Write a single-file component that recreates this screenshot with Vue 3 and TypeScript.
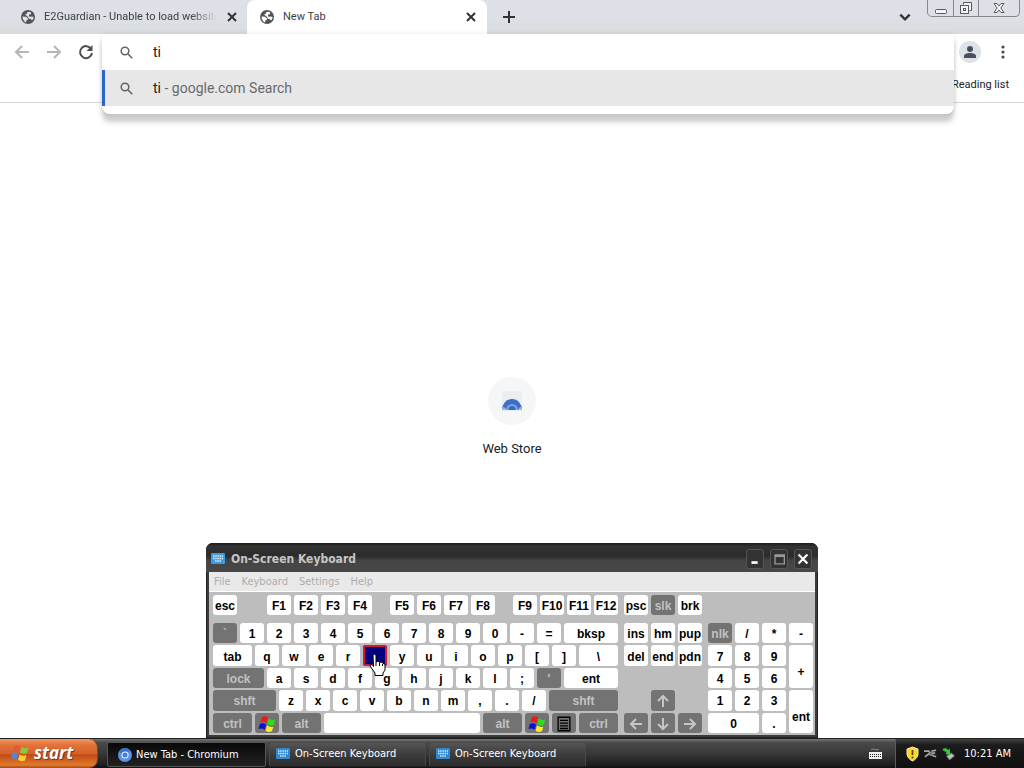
<script setup lang="ts">
import { ref } from 'vue'

interface Key {
  label: string
  w?: number
  kind?: 'dark' | 'win' | 'menu' | 'pressed' | 'up' | 'down' | 'left' | 'right'
  name?: string
  span?: string
}

const chars = (s: string): Key[] => s.split(' ').map((label) => ({ label }))

const query = ref('ti')

const functionGroups: Key[][] = [
  [{ label: 'esc' }],
  chars('F1 F2 F3 F4'),
  chars('F5 F6 F7 F8'),
  chars('F9 F10 F11 F12'),
]

const mainRows: Key[][] = [
  [{ label: '`', kind: 'dark' }, ...chars('1 2 3 4 5 6 7 8 9 0 - ='), { label: 'bksp', w: 54 }],
  [
    { label: 'tab', w: 39 },
    ...chars('q w e r'),
    { label: '', name: 't', kind: 'pressed' },
    ...chars('y u i o p [ ]'),
    { label: '\\', w: 39 },
  ],
  [
    { label: 'lock', w: 51, kind: 'dark' },
    ...chars('a s d f g h j k l ;'),
    { label: "'", kind: 'dark' },
    { label: 'ent', w: 54 },
  ],
  [{ label: 'shft', w: 63, kind: 'dark' }, ...chars('z x c v b n m , . /'), { label: 'shft', w: 69, kind: 'dark' }],
  [
    { label: 'ctrl', w: 39, kind: 'dark' },
    { label: '', name: 'Windows', kind: 'win' },
    { label: 'alt', w: 39, kind: 'dark' },
    { label: '', name: 'space', w: 156 },
    { label: 'alt', w: 39, kind: 'dark' },
    { label: '', name: 'Windows', kind: 'win' },
    { label: '', name: 'Menu', kind: 'menu' },
    { label: 'ctrl', w: 39, kind: 'dark' },
  ],
]

const systemKeys: Key[] = [{ label: 'psc' }, { label: 'slk', kind: 'dark' }, { label: 'brk' }]

const navKeys: Key[] = [
  ...chars('ins hm pup del end pdn'),
  { label: '', name: 'Up', kind: 'up', span: 'n-up' },
  { label: '', name: 'Left', kind: 'left', span: 'n-left' },
  { label: '', name: 'Down', kind: 'down', span: 'n-down' },
  { label: '', name: 'Right', kind: 'right', span: 'n-right' },
]

const padKeys: Key[] = [
  { label: 'nlk', kind: 'dark' },
  ...chars('/ * - 7 8 9'),
  { label: '+', span: 'tall' },
  ...chars('4 5 6 1 2 3'),
  { label: 'ent', span: 'tall' },
  { label: '0', span: 'wide' },
  { label: '.' },
]

const arrows: Record<string, string> = {
  up: 'M8 14V3M3 8l5-5 5 5',
  down: 'M8 2v11M3 8l5 5 5-5',
  left: 'M14 8H3M8 3L3 8l5 5',
  right: 'M2 8h11M8 3l5 5-5 5',
}

const menus = ['File', 'Keyboard', 'Settings', 'Help']
const isDark = (k: Key) => !!k.kind && k.kind !== 'pressed'
</script>

<template>
  <div class="desktop">
    <main class="browser">
      <header class="tabstrip">
        <div class="tab">
          <svg class="globe" viewBox="0 0 14 14"><circle cx="7" cy="7" r="7" fill="#505458" /><path d="M1.500 6.500l3.500.3 2 1.700-.3 1.500-1.500.5v2C3 11.800 1.400 9.500 1.500 6.500zM6.500 2l2-.3 1.800 1-.5 1.500-1.600.4-.4 1.600 1.700.6 1.700-.4 1.500.8c-.2 1.300-.8 2.400-1.700 3.300l-1.200-1.400-2-.3-1-2L5 5.200l-1.200-.4L5.500 4z" fill="#dee1e6" /></svg>
          <button class="tab-title">E2Guardian - Unable to load website</button>
          <button class="tab-close" aria-label="Close tab"><svg viewBox="0 0 10 10"><path d="M1 1l8 8M9 1L1 9" /></svg></button>
        </div>
        <div class="tab active">
          <svg class="globe" viewBox="0 0 14 14"><circle cx="7" cy="7" r="7" fill="#505458" /><path d="M1.500 6.500l3.500.3 2 1.700-.3 1.500-1.500.5v2C3 11.800 1.400 9.500 1.500 6.500zM6.500 2l2-.3 1.800 1-.5 1.500-1.600.4-.4 1.600 1.700.6 1.700-.4 1.500.8c-.2 1.300-.8 2.400-1.700 3.300l-1.200-1.400-2-.3-1-2L5 5.200l-1.200-.4L5.500 4z" fill="#fff" /></svg>
          <button class="tab-title">New Tab</button>
          <button class="tab-close" aria-label="Close tab"><svg viewBox="0 0 10 10"><path d="M1 1l8 8M9 1L1 9" /></svg></button>
        </div>
        <button class="new-tab" aria-label="New tab"><svg viewBox="0 0 12 12"><path d="M6 0v12M0 6h12" /></svg></button>
        <button class="tab-search" aria-label="Search tabs"><svg viewBox="0 0 12 12"><path d="M2 4l4 4 4-4" /></svg></button>
        <div class="caption">
          <button aria-label="Minimize"><svg viewBox="0 0 14 14"><rect x="1.500" y="8.500" width="11" height="4" rx="1" /></svg></button>
          <button aria-label="Restore"><svg viewBox="0 0 14 14"><path d="M4.500 3.500v-2h8v8h-2" /><rect x="1.500" y="4.500" width="8" height="8" /><rect x="4.500" y="7.500" width="2" height="2" /></svg></button>
          <button class="wide-btn" aria-label="Close"><svg viewBox="0 0 14 14"><path d="M2 2.500h3l2 2.500 2-2.500h3L8.800 7l3.200 4.500H9L7 9l-2 2.500H2L5.200 7z" /></svg></button>
        </div>
      </header>

      <div class="toolbar">
        <button class="nav muted" aria-label="Back"><svg viewBox="0 0 16 16"><path d="M15 8H2M8 2L2 8l6 6" /></svg></button>
        <button class="nav muted" aria-label="Forward"><svg viewBox="0 0 16 16"><path d="M1 8h13M8 2l6 6-6 6" /></svg></button>
        <button class="nav" aria-label="Reload"><svg viewBox="0 0 16 16"><path d="M13.200 5A6 6 0 1 0 14 9" /><path d="M14.500 1v6h-6z" fill="#4b4e52" stroke="none" /></svg></button>
        <span class="grow"></span>
        <button class="avatar" aria-label="Profile"><svg viewBox="0 0 14 14"><circle cx="7" cy="4" r="3" /><path d="M1 13v-2c0-2 3-3 6-3s6 1 6 3v2z" /></svg></button>
        <button class="more" aria-label="Menu"><svg viewBox="0 0 4 14"><circle cx="2" cy="2" r="1.600" /><circle cx="2" cy="7" r="1.600" /><circle cx="2" cy="12" r="1.600" /></svg></button>
      </div>
      <div class="bookmarks"><button>Reading list</button></div>

      <div class="omnibox">
        <label class="omni-row">
          <svg class="glass" viewBox="0 0 13 13"><circle cx="5" cy="5" r="3.800" /><path d="M8 8l4.300 4.300" /></svg>
          <input v-model="query" aria-label="Address and search bar" />
        </label>
        <button class="omni-row suggestion">
          <svg class="glass" viewBox="0 0 13 13"><circle cx="5" cy="5" r="3.800" /><path d="M8 8l4.300 4.300" /></svg>
          <span><b>{{ query }}</b> - google.com Search</span>
        </button>
      </div>

      <section class="page">
        <a class="shortcut" href="#">
          <span class="tile">
            <svg viewBox="0 0 20 20"><rect width="20" height="20" fill="#e9eef2" /><path d="M0 19a10 11 0 0 1 20 0z" fill="#3f6cc4" /><path d="M4 19a6 6 0 0 1 12 0z" fill="#7ea3e2" /><path d="M6.500 19a3.500 4 0 0 1 7 0z" fill="#3568c9" /><path d="M0 19c0-2 1-3 2-3l3 3zM20 19c0-2-1-3-2-3l-2 3z" fill="#9dbbe8" /></svg>
          </span>
          <span>Web Store</span>
        </a>
      </section>
    </main>

    <section class="osk">
      <header class="osk-title">
        <svg class="kb-icon" viewBox="0 0 14 11"><rect width="14" height="11" rx="1" fill="#3f9be0" /><path d="M2 3h10M2 5.500h10M4 8h6" stroke="#d8f0ff" stroke-width="1.500" stroke-dasharray="1.500 .7" /></svg>
        <h1>On-Screen Keyboard</h1>
        <button aria-label="Minimize"><svg viewBox="0 0 18 18"><path d="M5 13h7" stroke="#fff" stroke-width="3" /></svg></button>
        <button aria-label="Maximize"><svg viewBox="0 0 18 18"><path d="M4 4.500h11v10H4.500v-10M4 6h11" stroke="#999" stroke-width="1.500" fill="none" /></svg></button>
        <button aria-label="Close"><svg viewBox="0 0 18 18"><path d="M4 4l10 10M14 4L4 14" stroke="#fff" stroke-width="2.500" /></svg></button>
      </header>
      <nav class="osk-menu"><button v-for="m in menus" :key="m">{{ m }}</button></nav>

      <div class="keyboard">
        <div class="main-block">
          <div class="fn-row">
            <div v-for="(group, g) in functionGroups" :key="g" class="key-row fn-group">
              <button v-for="k in group" :key="k.label" class="key">{{ k.label }}</button>
            </div>
          </div>
          <div class="rows">
            <div v-for="(row, r) in mainRows" :key="r" class="key-row">
              <button
                v-for="(k, i) in row"
                :key="i"
                class="key"
                :class="{ dark: isDark(k), pressed: k.kind === 'pressed' }"
                :style="{ flexGrow: k.w ?? 24 }"
                :aria-label="k.name"
              >
                {{ k.label }}
                <svg v-if="k.kind === 'win'" class="flag" viewBox="0 0 20 20">
                  <path d="M4 3q3-3 7-.5L9.500 9Q6 6.500 2.500 8.500z" fill="#f01818" />
                  <path d="M12 4q3 2.500 7 1l-1.500 6q-4 1.500-7-1z" fill="#28e018" />
                  <path d="M2 10q4-2 7 .5L7.500 16.500Q4 14 .5 15.500z" fill="#1010d0" />
                  <path d="M10 11.500q3 2.500 7 1.500l-1.500 5q-4 2-7-.5z" fill="#f8f020" />
                </svg>
                <svg v-if="k.kind === 'menu'" class="flag" viewBox="0 0 20 20"><path d="M3.500 2.500h13v15h-13zM5.500 6h9M5.500 9h9M5.500 12h9M5.500 15h9" fill="none" stroke="#000" stroke-width="1.500" /></svg>
                <svg v-if="k.kind === 'pressed'" class="pointer" viewBox="0 0 18 24"><path d="M4 2q1.500-1.500 3 0v7l2-1 1.500 1.500 2-.5 1.500 1.500 2 .5v6l-2 3v2.500H6V20l-5-7q0-2 2-1.500l1.500 2z" fill="#fff" stroke="#000" /><path d="M7 9v4M10.500 10v3M13.500 11v2" stroke="#000" fill="none" /></svg>
              </button>
            </div>
          </div>
        </div>
        <div class="nav-block">
          <div class="key-row fn-line"><button v-for="k in systemKeys" :key="k.label" class="key" :class="{ dark: isDark(k) }">{{ k.label }}</button></div>
          <div class="rows three">
            <button v-for="(k, i) in navKeys" :key="i" class="key" :class="[k.span, { dark: isDark(k) }]" :aria-label="k.name">
              {{ k.label }}
              <svg v-if="k.kind" class="arrow" viewBox="0 0 16 16"><path :d="arrows[k.kind]" /></svg>
            </button>
          </div>
        </div>
        <div class="pad-block">
          <div class="rows four">
            <button v-for="(k, i) in padKeys" :key="i" class="key" :class="[k.span, { dark: isDark(k) }]">{{ k.label }}</button>
          </div>
        </div>
      </div>
    </section>

    <footer class="taskbar">
      <button class="start">
        <svg viewBox="0 0 20 18">
          <path d="M4 3q3-3 6-.5L8.500 8.500Q5.500 6.500 2.500 8z" fill="#e2583a" />
          <path d="M11.500 3q3 2 7 .5L17 9q-4 1.500-7-.5z" fill="#8cc63f" />
          <path d="M2 9.500q3-2 6 .5l-1.500 5.500Q3.500 13.500.5 15z" fill="#4f86e0" />
          <path d="M9.500 10.500q3 2 7 .5L15 16.500q-4 1.500-7-.5z" fill="#f8d030" />
        </svg>
        start
      </button>
      <button class="task current">
        <svg class="chromium" viewBox="0 0 14 14"><circle cx="7" cy="7" r="7" fill="#5b93e6" /><path d="M7 3.500h6A7 7 0 0 0 1.500 3L4 8z" fill="#3a6fc8" /><circle cx="7" cy="7" r="3.600" fill="#e8f1ff" /><circle cx="7" cy="7" r="2.500" fill="#3f7de0" /></svg>
        New Tab - Chromium
      </button>
      <button v-for="n in 2" :key="n" class="task">
        <svg class="kb-icon" viewBox="0 0 14 11"><rect width="14" height="11" rx="1" fill="#3288cc" /><path d="M2 3h10M2 5.500h10M4 8h6" stroke="#c8ecff" stroke-width="1.500" stroke-dasharray="1.500 .7" /></svg>
        On-Screen Keyboard
      </button>
      <span class="grow"></span>
      <button class="lang" aria-label="Keyboard layout"><svg viewBox="0 0 13 13"><path d="M0 5h13v7H0z" fill="#eee" /><path d="M1 7.500h11M1 9.500h11" stroke="#222" stroke-dasharray="1 1" /><path d="M2 2.500q2-1 4 0t4-.5" fill="none" stroke="#888" /></svg></button>
      <div class="tray">
        <svg viewBox="0 0 14 16"><path d="M7 1l5.500 2v5c0 3-2.500 5.500-5.500 7-3-1.500-5.500-4-5.500-7V3z" fill="#fcd82c" stroke="#f6eeb0" /><path d="M7 4v5M7 10.500v2" stroke="#5c4700" stroke-width="1.800" /></svg>
        <svg viewBox="0 0 16 16"><path d="M1 5h5l2 2h5M2 11l4-3 8 3M9 5l5-1" stroke="#a4a8a4" stroke-width="1.800" fill="none" /><path d="M7 7l4 2" stroke="#666" stroke-width="1.500" fill="none" /></svg>
        <svg viewBox="0 0 14 16"><path d="M5 10l5-3 3 3-5 4z" fill="#b8beb8" stroke="#666" /><path d="M1 3l3-1 3 2 1-2 1 7-5-1 1-2-3-1z" fill="#35c43b" /></svg>
        <time>10:21 AM</time>
      </div>
    </footer>
  </div>
</template>

<style>
html,
body {
  margin: 0;
}
</style>

<style scoped>
.desktop {
  position: relative;
  display: flex;
  flex-direction: column;
  height: 100vh;
  overflow: hidden;
  background: #fff;
  font-family: "DejaVu Sans Condensed", "Noto Sans", sans-serif;
  font-size: 11px;
  color: #3c4043;
}
* {
  box-sizing: border-box;
}
button,
input {
  margin: 0;
  padding: 0;
  border: 0;
  background: none;
  font: inherit;
  color: inherit;
}
svg {
  display: block;
  flex: none;
}
.grow {
  flex: 1;
}
.browser {
  position: relative;
  display: flex;
  flex-direction: column;
  flex: 1;
  font-family: Roboto, "Noto Sans", sans-serif;
}
.tabstrip {
  display: flex;
  height: 34px;
  background: linear-gradient(#e0e0e8, #dce0e6 60%, #d8dbdd);
}
.tab {
  display: flex;
  align-items: center;
  gap: 9px;
  width: 240px;
  padding: 0 10px 0 13px;
}
.tab:first-child {
  width: 247px;
  padding: 0 9px 0 21px;
}
.tab.active {
  background: #fff;
  border-radius: 8px 8px 0 0;
}
.globe {
  width: 14px;
  height: 14px;
}
.tab-title {
  flex: 1;
  min-width: 0;
  overflow: hidden;
  white-space: nowrap;
  text-align: left;
  line-height: 20px;
}
.tab:first-child .tab-title {
  mask-image: linear-gradient(90deg, #000 85%, transparent);
}
.tab-close svg {
  width: 12px;
  height: 10px;
  stroke: #303236;
  stroke-width: 2;
}
.new-tab {
  width: 44px;
  display: grid;
  place-items: center;
}
.new-tab svg {
  width: 12px;
  height: 12px;
  stroke: #303236;
  stroke-width: 2;
}
.tab-search {
  margin-left: auto;
  padding-right: 15px;
}
.tab-search svg {
  width: 14px;
  height: 14px;
  fill: none;
  stroke: #303236;
  stroke-width: 2;
}
.caption {
  display: flex;
  height: 17px;
  margin-right: 4px;
  border: 1px solid #85888c;
  border-top: 0;
  border-radius: 0 0 5px 5px;
}
.caption button {
  width: 25px;
  display: grid;
  place-items: center;
}
.caption button + button {
  border-left: 1px solid #85888c;
}
.caption .wide-btn {
  width: 41px;
}
.caption svg {
  width: 14px;
  height: 14px;
  fill: #f4f4f6;
  stroke: #55585c;
}
.toolbar {
  display: flex;
  align-items: center;
  height: 36px;
  padding: 0 13px 0 14px;
  gap: 16px;
}
.nav svg {
  width: 16px;
  height: 16px;
  fill: none;
  stroke: #4b4e52;
  stroke-width: 2;
}
.nav.muted svg {
  stroke: #b4b6b8;
}
.avatar {
  width: 22px;
  height: 22px;
  margin-right: -2px;
  border-radius: 50%;
  background: #dde1e8;
  display: grid;
  place-items: center;
}
.avatar svg {
  width: 14px;
  height: 14px;
  fill: #47505c;
}
.more {
  width: 16px;
  display: grid;
  place-items: center;
}
.more svg {
  width: 4px;
  height: 14px;
  fill: #47494d;
}
.bookmarks {
  display: flex;
  justify-content: flex-end;
  height: 33px;
  padding: 0 15px 4px 0;
  border-bottom: 1px solid #d6d8da;
  color: #202124;
}
.omnibox {
  position: absolute;
  top: 34px;
  left: 102px;
  right: 70px;
  padding-bottom: 8px;
  background: #fff;
  border-radius: 0 0 8px 8px;
  box-shadow: 0 8px 5px rgba(70, 80, 75, 0.28), 0 0 4px rgba(0, 0, 0, 0.1);
  font-size: 14px;
}
.omni-row {
  display: flex;
  align-items: center;
  gap: 20px;
  width: 100%;
  height: 36px;
  padding-left: 18px;
}
.omni-row input {
  flex: 1;
  outline: none;
  color: #222;
}
.suggestion {
  padding-left: 15px;
  border-left: 3px solid #2a66c8;
  background: #e7e7e7;
  color: #686a6d;
}
.suggestion b {
  font-weight: 400;
  color: #222;
}
.glass {
  width: 13px;
  height: 13px;
  fill: none;
  stroke: #5f6368;
  stroke-width: 1.5;
}
.page {
  display: flex;
  flex: 1;
  justify-content: center;
  padding-top: 274px;
}
.shortcut {
  display: flex;
  flex-direction: column;
  align-items: center;
  gap: 15px;
  height: 82px;
  color: #202124;
  text-decoration: none;
  font: 13px/18px Roboto, sans-serif;
}
.tile {
  display: grid;
  place-items: center;
  width: 48px;
  height: 48px;
  border-radius: 50%;
  background: #f5f6f7;
}
.tile svg {
  width: 20px;
  height: 20px;
}
.osk {
  position: absolute;
  left: 206px;
  bottom: 30px;
  width: 612px;
  padding: 0 3px 3px;
  border-radius: 7px 7px 0 0;
  background: #3c3c3c;
  box-shadow: inset 0 0 0 1px #222;
}
.osk-title {
  display: flex;
  align-items: center;
  gap: 6px;
  height: 29px;
  margin: 0 -3px;
  padding: 2px 6px 0 5px;
  border-radius: 7px 7px 0 0;
  background: linear-gradient(#1c1c1c, #333 12%, #2b2b2b 45%, #444 60%, #484848);
}
.osk-title h1 {
  flex: 1;
  margin: 0;
  font-size: 12px;
  font-weight: 700;
  color: #c6c6c6;
}
.kb-icon {
  width: 14px;
  height: 11px;
}
.osk-title button {
  border: 1px solid #555;
  border-radius: 3px;
  background: #333;
}
.osk-title button svg {
  width: 16px;
  height: 18px;
}
.osk-menu {
  display: flex;
  gap: 11px;
  height: 20px;
  padding: 0 5px 1px;
  background: #e9e9e9;
  border-bottom: 1px solid #fff;
  color: #adadad;
}
.keyboard {
  display: grid;
  grid-template-columns: 405fr 78fr 105fr;
  gap: 6px;
  padding: 3px 2px 2px 4px;
  background: #bdbdbd;
  font: 700 12px/16px "Liberation Sans", Arial, sans-serif;
}
.fn-row {
  display: flex;
  gap: 18px;
  height: 20px;
  margin-bottom: 8px;
}
.fn-group {
  flex: 4 1 0;
}
.fn-group:first-child {
  flex: none;
  width: 24px;
  margin-right: 12px;
}
.fn-line {
  height: 20px;
  margin-bottom: 8px;
}
.key-row {
  display: flex;
  gap: 3px;
}
.rows {
  display: grid;
  grid-template-rows: repeat(5, minmax(0, 1fr));
  gap: 2px 3px;
  height: 110px;
}
.rows.three {
  grid-template-columns: repeat(3, minmax(0, 1fr));
}
.rows.four {
  grid-template-columns: repeat(4, minmax(0, 1fr));
}
.pad-block {
  padding-top: 28px;
}
.key {
  position: relative;
  display: flex;
  align-items: center;
  justify-content: center;
  flex: 1 1 0;
  min-width: 0;
  padding-top: 2px;
  border-radius: 3px;
  background: #fff;
  color: #000;
  white-space: nowrap;
}
.key.dark {
  background: #737373;
  color: #c2c2c2;
}
.key.pressed {
  box-shadow: inset 0 0 0 2px #d21a36;
  background: #000080;
}
.pointer {
  position: absolute;
  top: 8px;
  left: 6px;
  z-index: 2;
  width: 18px;
  height: 24px;
}
.flag {
  width: 20px;
  height: 18px;
}
.arrow {
  width: 16px;
  height: 16px;
  fill: none;
  stroke: #c6c6c6;
  stroke-width: 2;
}
.n-up {
  grid-area: 4 / 2;
}
.n-left {
  grid-area: 5 / 1;
}
.n-down {
  grid-area: 5 / 2;
}
.n-right {
  grid-area: 5 / 3;
}
.key.tall {
  grid-row: span 2;
  padding-top: 10px;
}
.wide {
  grid-column: span 2;
}
.taskbar {
  display: flex;
  align-items: stretch;
  height: 30px;
  border-top: 1px solid #222;
  background: linear-gradient(#777, #4a4a4a 12%, #383838 50%, #1e1e1e 90%, #111);
  color: #fff;
}
.start {
  display: flex;
  align-items: center;
  gap: 4px;
  width: 98px;
  margin-right: 9px;
  padding: 0 0 2px 10px;
  border-right: 1px solid #7b4a33;
  border-radius: 0 9px 9px 0;
  background: linear-gradient(#f39a63, #e2733a 20%, #d4622a 50%, #c04c14 55%, #e07a2c 90%, #a04a18);
  font: italic 700 17px/20px "Open Sans", sans-serif;
  text-shadow: 1px 1px 1px #633;
}
.start svg {
  width: 20px;
  height: 18px;
}
.task {
  display: flex;
  align-items: center;
  gap: 5px;
  width: 157px;
  margin: 3px 3px 1px 0;
  padding: 0 0 2px 6px;
  border: 1px solid #484848;
  border-bottom-color: #222;
  border-radius: 2px;
  background: linear-gradient(#555, #3c3c3c 50%, #2c2c2c);
}
.task.current {
  width: 159px;
  padding: 0 0 0 10px;
  gap: 4px;
  border-color: #555;
  background: linear-gradient(#080808, #1b1b1b 70%, #222);
}
.chromium {
  width: 14px;
  height: 14px;
}
.lang {
  padding-right: 13px;
}
.lang svg {
  width: 13px;
  height: 13px;
}
.tray {
  display: flex;
  align-items: center;
  gap: 3px;
  padding: 0 13px 0 9px;
  border-left: 1px solid #5a5a5a;
  background: linear-gradient(#444, #1c1c1c 20%, #101010);
}
.tray svg {
  width: 15px;
  height: 16px;
}
.tray time {
  margin-left: 5px;
}
</style>
